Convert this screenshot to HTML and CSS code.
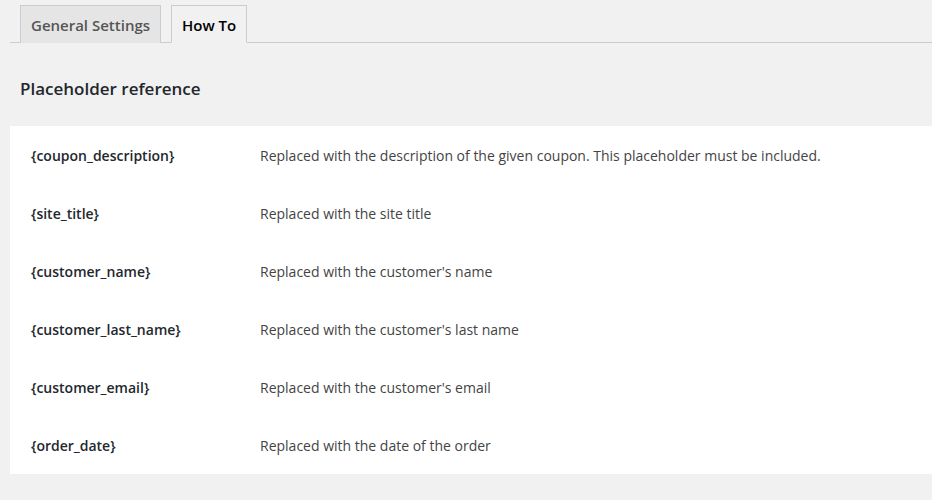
FILE: index.html
```html
<!DOCTYPE html>
<html>
<head>
<meta charset="utf-8">
<link rel="stylesheet" href="styles.css">
</head>
<body>
<div class="wrap">
  <nav class="tabs">
    <a class="tab">General Settings</a>
    <a class="tab active">How To</a>
  </nav>
  <h2 class="title">Placeholder reference</h2>
  <div class="card">
    <div class="row"><div class="key">{coupon_description}</div><div class="desc">Replaced with the description of the given coupon. This placeholder must be included.</div></div>
    <div class="row"><div class="key">{site_title}</div><div class="desc">Replaced with the site title</div></div>
    <div class="row"><div class="key">{customer_name}</div><div class="desc">Replaced with the customer's name</div></div>
    <div class="row"><div class="key">{customer_last_name}</div><div class="desc">Replaced with the customer's last name</div></div>
    <div class="row"><div class="key">{customer_email}</div><div class="desc">Replaced with the customer's email</div></div>
    <div class="row"><div class="key">{order_date}</div><div class="desc">Replaced with the date of the order</div></div>
  </div>
</div>
</body>
</html>
```
FILE: styles.css
```css
html, body { margin: 0; padding: 0; }
body {
  background: #f1f1f1;
  font-family: "Open Sans", "Liberation Sans", sans-serif;
  color: #444;
  font-size: 13px;
}
.wrap { padding-left: 10px; }
.tabs {
  display: flex;
  gap: 10px;
  padding: 5px 0 0 10px;
  border-bottom: 1px solid #ccc;
  height: 37px;
  box-sizing: content-box;
}
.tab {
  display: block;
  border: 1px solid #ccc;
  border-bottom: none;
  background: #e5e5e5;
  color: #555;
  font-size: 15px;
  font-weight: 600;
  line-height: 24px;
  padding: 7px 10px 5px;
  margin-bottom: -1px;
}
.tab.active {
  background: #f1f1f1;
  color: #000;
  border-bottom: 1px solid #f1f1f1;
}
.title {
  margin: 0;
  padding: 34px 0 0 10px;
  height: 49px;
  font-size: 17px;
  font-weight: 600;
  color: #23282d;
  line-height: 24px;
}
.card {
  background: #fff;
}
.row {
  display: flex;
  align-items: center;
  height: 58px;
}
.key {
  width: 229px;
  padding-left: 21px;
  color: #23282d;
  font-weight: 600;
  font-size: 14px;
}
.desc {
  color: #444;
  font-size: 14px;
}
```
